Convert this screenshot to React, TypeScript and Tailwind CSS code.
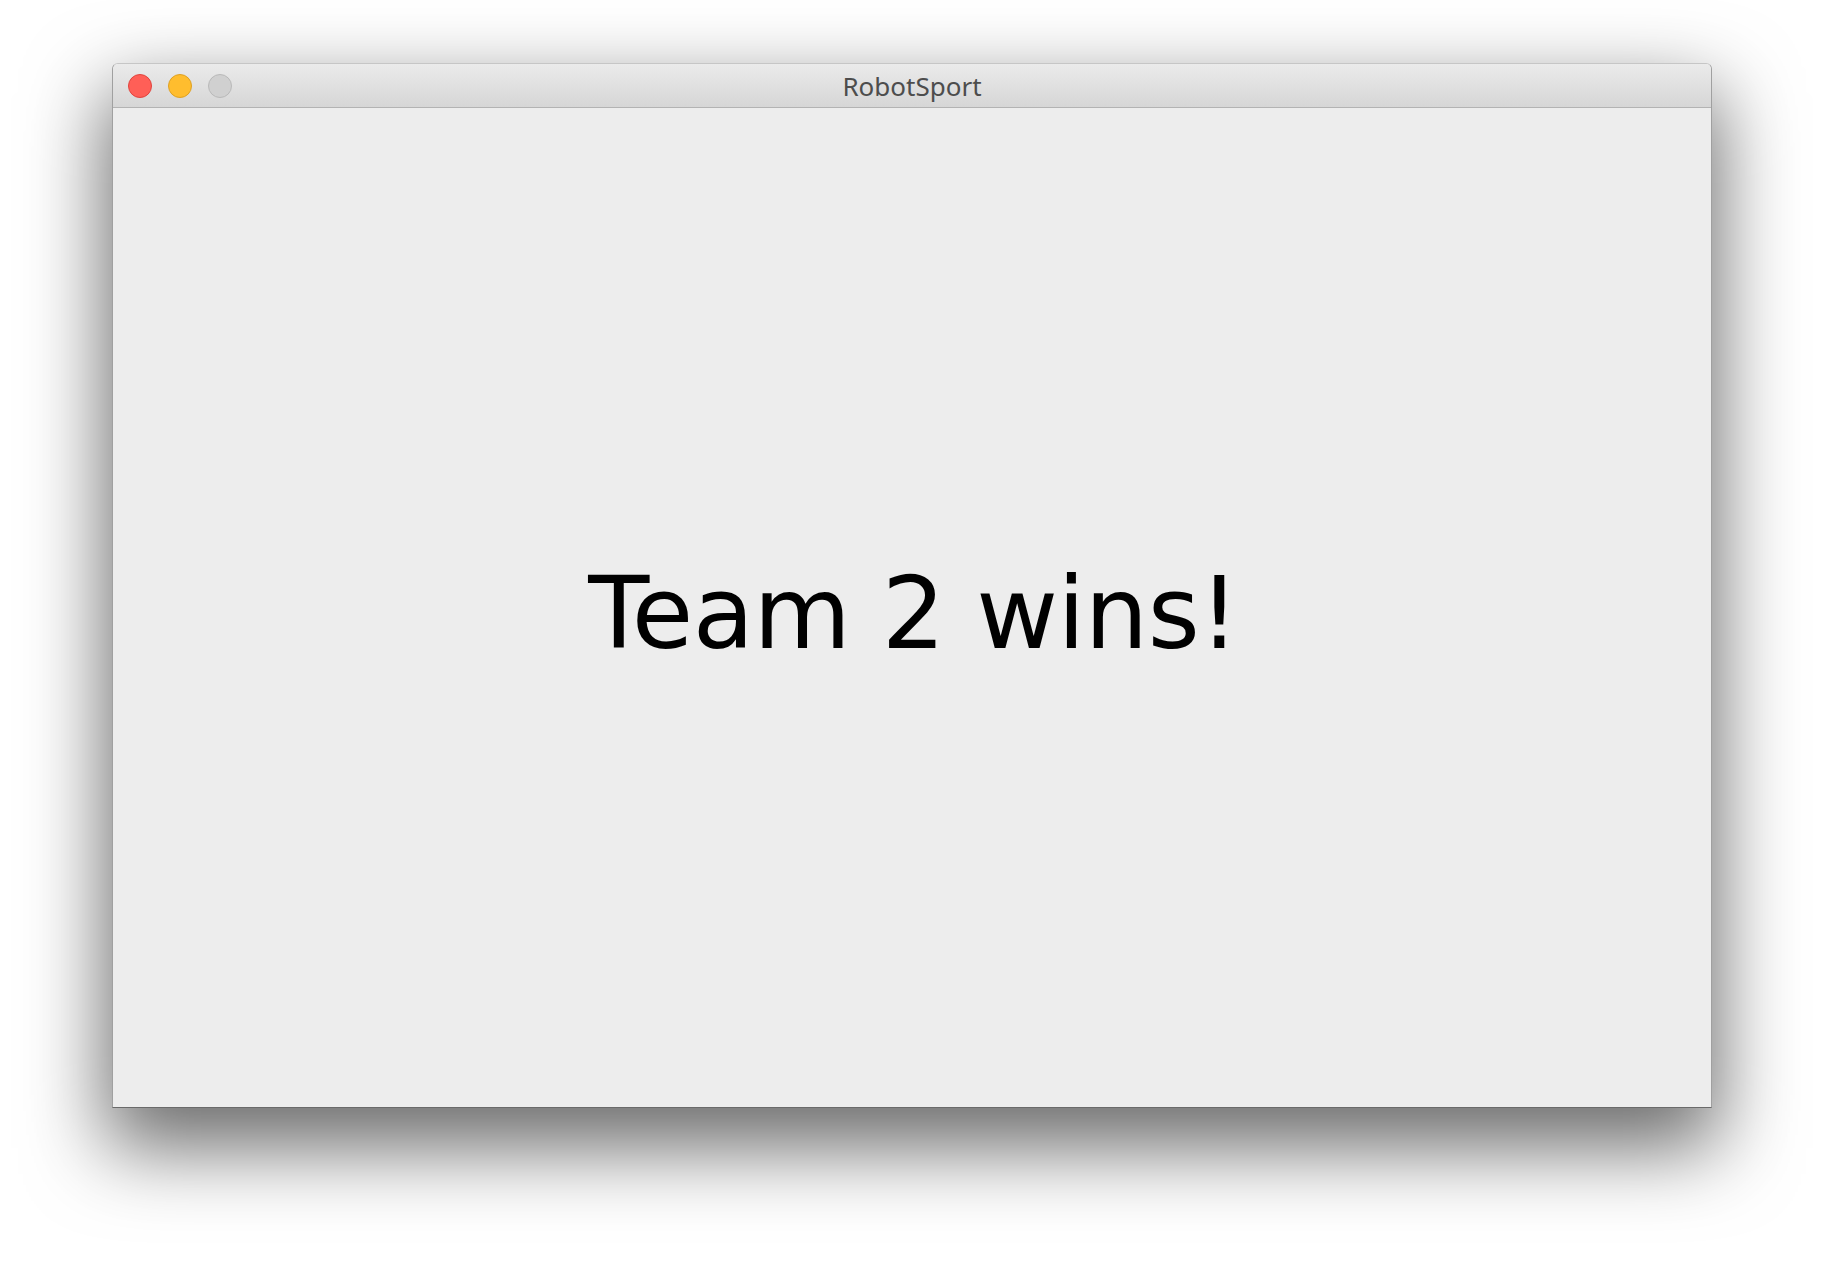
export default function App(): React.JSX.Element {
  return (
    <div className="min-h-[1268px] w-[1824px] overflow-hidden bg-white pl-[112px] pt-[63px]">
      <div className="flex h-[1045px] w-[1600px] flex-col overflow-hidden rounded-t-[6px] border border-[#a0a0a0] border-b-[#6a6a6a] border-t-[#c6c6c6] bg-[#ededed] shadow-[0_34px_80px_6px_rgba(0,0,0,0.58)]">
        {/* title bar */}
        <div className="relative flex h-[44px] shrink-0 items-center justify-center border-b border-[#b3b3b3] bg-gradient-to-b from-[#ebebeb] to-[#d6d6d6]">
          <div className="absolute left-[15px] top-[10px] flex gap-[16px]">
            <span className="block h-[24px] w-[24px] rounded-full border border-[#e0443e] bg-[#ff5f57]" />
            <span className="block h-[24px] w-[24px] rounded-full border border-[#dea123] bg-[#ffbd2e]" />
            <span className="block h-[24px] w-[24px] rounded-full border border-[#b9b9b9] bg-[#d0d0d0]" />
          </div>
          <span className="font-['Noto_Sans',sans-serif] text-[26px] leading-none text-[#4d4d4d]">
            RobotSport
          </span>
        </div>
        {/* content */}
        <div className="flex flex-1 items-center justify-center pl-[3px] pt-[12px]">
          <span className="font-['DejaVu_Sans',sans-serif] text-[100px] leading-none tracking-[-0.5px] text-black">
            Team 2 wins!
          </span>
        </div>
      </div>
    </div>
  )
}
